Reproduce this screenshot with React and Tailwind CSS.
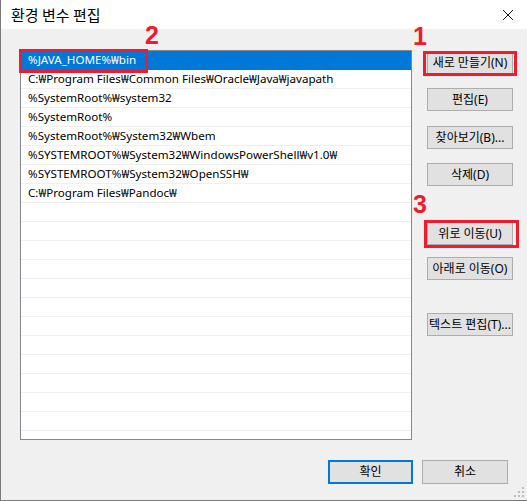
import React from 'react';

const paths = [
  '%JAVA_HOME%₩bin',
  'C:₩Program Files₩Common Files₩Oracle₩Java₩javapath',
  '%SystemRoot%₩system32',
  '%SystemRoot%',
  '%SystemRoot%₩System32₩Wbem',
  '%SYSTEMROOT%₩System32₩WindowsPowerShell₩v1.0₩',
  '%SYSTEMROOT%₩System32₩OpenSSH₩',
  'C:₩Program Files₩Pandoc₩',
];

const rows = [...paths, ...Array(13).fill('')];

function Btn({ children, className = '' }) {
  return (
    <button
      className={`h-[23px] w-[86px] border border-[#adadad] bg-[#e1e1e1] text-[12px] leading-none text-black ${className}`}
    >
      {children}
    </button>
  );
}

function Mark({ children, className }) {
  return (
    <span className={`absolute text-[25px] font-bold leading-none text-[#ee1c2e] font-['Liberation_Sans',sans-serif] ${className}`}>
      {children}
    </span>
  );
}

export default function App() {
  return (
    <div className="relative flex h-[501px] w-[527px] flex-col overflow-hidden border-b border-l border-[#7a7a7a] bg-[#f0f0f0] font-['Noto_Sans','Noto_Sans_CJK_KR',sans-serif] text-black">
      <div className="flex h-[29px] shrink-0 items-center justify-between bg-white pl-[10px] pr-[10px]">
        <span className="text-[15px] leading-none font-['Noto_Sans_CJK_KR',sans-serif]">환경 변수 편집</span>
        <svg width="12" height="12" viewBox="0 0 12 12" className="mr-[3px]">
          <path d="M1 1 L11 11 M11 1 L1 11" stroke="#111" strokeWidth="1" />
        </svg>
      </div>

      <div className="flex pl-[19px] pt-[21px]">
        <div className="h-[390px] w-[392px] overflow-hidden border border-[#828790] bg-white">
          {rows.map((p, i) => (
            <div
              key={i}
              className={`flex h-[19px] items-center border-b pl-[7px] text-[11.6px] leading-none ${
                i === 0 ? 'border-[#0078d7] bg-[#0078d7] text-white' : 'border-[#f0f0f0]'
              }`}
            >
              {p}
            </div>
          ))}
        </div>

        <div className="ml-[15px] flex flex-col">
          <Btn className="mt-[1px]">새로 만들기(N)</Btn>
          <Btn className="mt-[14px]">편집(E)</Btn>
          <Btn className="mt-[15px]">찾아보기(B)...</Btn>
          <Btn className="mt-[14px]">삭제(D)</Btn>
          <Btn className="mt-[36px]">위로 이동(U)</Btn>
          <Btn className="mt-[12px]">아래로 이동(O)</Btn>
          <Btn className="mt-[33px]">텍스트 편집(T)...</Btn>
        </div>
      </div>

      <div className="mt-[20px] flex justify-end gap-[9px] pr-[19px]">
        <button className="h-[24px] w-[85px] border-2 border-[#0078d7] bg-[#e1e1e1] text-[12px] leading-none">확인</button>
        <button className="h-[24px] w-[86px] border border-[#adadad] bg-[#e1e1e1] text-[12px] leading-none">취소</button>
      </div>

      {/* size grip */}
      <svg width="10" height="10" viewBox="0 0 10 10" className="absolute bottom-[3px] right-[3px]">
        <rect x="8" y="0" width="2" height="2" fill="#bcbcbc" />
        <rect x="4" y="4" width="2" height="2" fill="#bcbcbc" />
        <rect x="8" y="4" width="2" height="2" fill="#bcbcbc" />
        <rect x="0" y="8" width="2" height="2" fill="#bcbcbc" />
        <rect x="4" y="8" width="2" height="2" fill="#bcbcbc" />
        <rect x="8" y="8" width="2" height="2" fill="#bcbcbc" />
      </svg>

      {/* annotations */}
      <div className="absolute left-[18px] top-[49px] h-[24px] w-[129px] border-[3px] border-[#ee1c2e]" />
      <div className="absolute left-[422px] top-[51px] h-[25px] w-[94px] border-[3px] border-[#ee1c2e]" />
      <div className="absolute left-[423px] top-[220px] h-[28px] w-[95px] border-[3px] border-[#ee1c2e]" />
      <Mark className="left-[144px] top-[23px]">2</Mark>
      <Mark className="left-[412px] top-[24px]">1</Mark>
      <Mark className="left-[412px] top-[192px]">3</Mark>
    </div>
  );
}
